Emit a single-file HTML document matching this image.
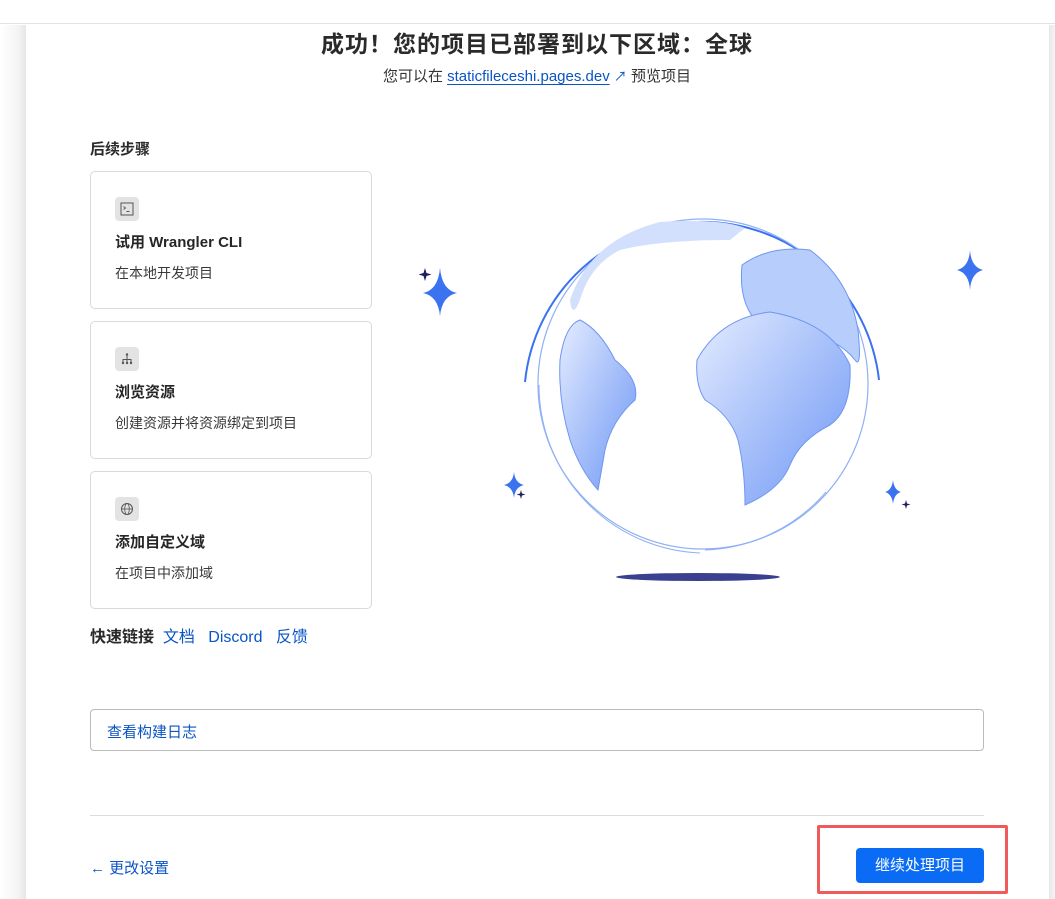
<!DOCTYPE html>
<html><head><meta charset="utf-8"><style>
*{margin:0;padding:0;box-sizing:border-box}
body{width:1055px;height:899px;overflow:hidden;background:#fff;font-family:"Liberation Sans","Noto Sans CJK SC",sans-serif;color:#313131;position:relative}
.a{position:absolute}
.topbar{left:0;top:0;width:1055px;height:24px;background:#fff;border-bottom:1px solid #e2e2e2}
.sh{left:0;top:25px;width:26px;height:874px;background:linear-gradient(90deg,#fff 0,#f4f4f4 18px,#e6e6e6 26px)}
.rs{left:1049px;top:25px;width:6px;height:874px;background:linear-gradient(90deg,#e8e8e8,#f4f4f4)}
.card{left:90px;width:282px;height:138px;border:1px solid #d9d9d9;border-radius:5px;background:#fff}
.ic{position:absolute;left:24px;top:25px;width:24px;height:24px;background:#e3e3e3;border-radius:4px}
.ct{position:absolute;left:24px;top:59px;font-size:15px;font-weight:bold;color:#262626}
.cd{position:absolute;left:24px;top:91px;font-size:14px;color:#3a3a3a}
.blue{color:#0a54c6}
</style></head><body>
<div class="a topbar"></div>
<div class="a sh"></div>
<div class="a rs"></div>
<div class="a" style="left:0;width:1074px;top:25px;text-align:center;font-size:23px;font-weight:bold;color:#2a2a2a;letter-spacing:1px">成功！您的项目已部署到以下区域：全球</div>
<div class="a" style="left:0;width:1074px;top:65px;text-align:center;font-size:15px;color:#333">您可以在 <span class="blue" style="text-decoration:underline;text-underline-offset:3px">staticfileceshi.pages.dev</span> <span class="blue" style="font-size:13px">&#x2197;&#xFE0E;</span> 预览项目</div>
<div class="a" style="left:90px;top:138px;font-size:15px;font-weight:bold;color:#2a2a2a">后续步骤</div>

<div class="a card" style="top:171px"><div class="ic"><svg width="24" height="24"><rect x="6" y="6" width="12" height="12" fill="none" stroke="#555" stroke-width="1"/><path d="M8.5 9.5l2 1.5-2 1.5M11.5 14.5h3" stroke="#555" fill="none" stroke-width="0.9"/></svg></div><div class="ct">试用 Wrangler CLI</div><div class="cd">在本地开发项目</div></div>
<div class="a card" style="top:321px"><div class="ic"><svg width="24" height="24"><path d="M12 7v4M8 15v-2.5h8V15M12 11v4" stroke="#555" fill="none" stroke-width="1"/><circle cx="12" cy="7.5" r="1.2" fill="#555"/><circle cx="8" cy="16" r="1.2" fill="#555"/><circle cx="12" cy="16" r="1.2" fill="#555"/><circle cx="16" cy="16" r="1.2" fill="#555"/></svg></div><div class="ct">浏览资源</div><div class="cd">创建资源并将资源绑定到项目</div></div>
<div class="a card" style="top:471px"><div class="ic"><svg width="24" height="24"><circle cx="12" cy="12" r="5.5" fill="none" stroke="#555"/><ellipse cx="12" cy="12" rx="2.3" ry="5.5" fill="none" stroke="#555" stroke-width="0.8"/><path d="M6.5 12h11" stroke="#555" stroke-width="0.8"/></svg></div><div class="ct">添加自定义域</div><div class="cd">在项目中添加域</div></div>

<div class="a" style="left:90px;top:623px;font-size:16px"><b style="color:#2a2a2a">快速链接</b>&nbsp; <span class="blue">文档</span>&nbsp;&nbsp; <span class="blue">Discord</span>&nbsp;&nbsp; <span class="blue">反馈</span></div>

<svg class="a" style="left:400px;top:190px" width="600" height="400" viewBox="400 190 600 400">
<defs><linearGradient id="g" x1="0" y1="0" x2="1" y2="1"><stop offset="0" stop-color="#e4ecff"/><stop offset="1" stop-color="#6d96f5"/></linearGradient></defs>
<path d="M525 382 A178 178 0 0 1 879 380" fill="none" stroke="#3b72f0" stroke-width="2"/>
<circle cx="703" cy="384" r="165" fill="none" stroke="#8fb0f5" stroke-width="1.2"/>
<path d="M539 385 A168 168 0 0 0 700 553" fill="none" stroke="#8fb0f5" stroke-width="1"/>
<path d="M705 550 A168 168 0 0 0 826 492" fill="none" stroke="#8fb0f5" stroke-width="1"/>
<path d="M570 300 Q590 240 660 222 Q720 218 745 228 L730 240 Q660 240 620 250 Q590 265 580 300 Q572 320 570 300Z" fill="#d3e0fd"/>
<path d="M560 360 Q565 325 580 320 Q600 330 615 360 Q640 380 635 400 Q612 420 605 450 L598 490 Q580 470 570 440 Q558 400 560 360Z" fill="url(#g)" stroke="#6f96f2"/>
<path d="M742 265 Q770 245 810 250 Q850 280 858 330 Q862 370 855 360 Q840 340 800 330 L760 325 Q738 305 742 265Z" fill="#b7cdfc" stroke="#6f96f2"/>
<path d="M697 360 Q720 318 770 312 Q830 322 850 365 Q852 410 830 425 Q800 440 790 465 Q780 490 745 505 Q745 470 738 440 Q730 415 705 400 Q695 385 697 360Z" fill="url(#g)" stroke="#6f96f2"/>
<ellipse cx="698" cy="577" rx="82" ry="4" fill="#3a3f8f"/>
<path d="M440 268 Q442 290 457 293 Q442 296 440 316 Q438 296 423 293 Q438 290 440 268Z" fill="#3b72f0"/>
<path d="M425 268 l1.5 5 5 1.5 -5 1.5 -1.5 5 -1.5 -5 -5 -1.5 5 -1.5Z" fill="#1f2060"/>
<path d="M970 250 Q971 267 983 270 Q971 273 970 290 Q969 273 957 270 Q969 267 970 250Z" fill="#3b72f0"/>
<path d="M514 472 Q515 483 524 485 Q515 487 514 498 Q513 487 504 485 Q513 483 514 472Z" fill="#3b72f0"/>
<path d="M521 490 l1 3.5 3.5 1 -3.5 1 -1 3.5 -1 -3.5 -3.5 -1 3.5 -1Z" fill="#1f2060"/>
<path d="M893 480 Q894 490 901 492 Q894 494 893 504 Q892 494 885 492 Q892 490 893 480Z" fill="#3b72f0"/>
<path d="M906 500 l1 3.5 3.5 1 -3.5 1 -1 3.5 -1 -3.5 -3.5 -1 3.5 -1Z" fill="#1f2060"/>
</svg>

<div class="a" style="left:90px;top:709px;width:894px;height:42px;border:1px solid #bbb;border-radius:4px"><span class="blue" style="position:absolute;left:16px;top:11px;font-size:15px">查看构建日志</span></div>
<div class="a" style="left:90px;top:815px;width:894px;height:1px;background:#dcdcdc"></div>
<div class="a blue" style="left:90px;top:857px;font-size:15px">← 更改设置</div>
<div class="a" style="left:817px;top:825px;width:191px;height:69px;border:3px solid #f05a5a;border-radius:2px"></div>
<div class="a" style="left:856px;top:848px;width:128px;height:35px;background:#0a6cf5;border-radius:4px;color:#fff;font-size:15px;text-align:center;line-height:35px">继续处理项目</div>
</body></html>
